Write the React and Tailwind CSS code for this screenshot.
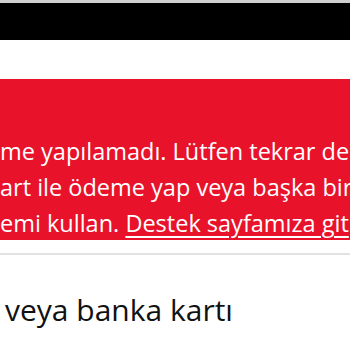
export default function App() {
  return (
    <div className="w-[350px] h-[350px] overflow-hidden bg-white font-['Open_Sans',sans-serif]">
      <div className="h-[3px] bg-[#cfcfcf]" />
      <div className="h-[37px] bg-black" />
      <div className="h-[39px] bg-white" />
      <div className="h-[161px] bg-[#e8132b] pt-[54px] text-white text-[23.5px] font-medium leading-[36px] whitespace-nowrap">
        <p>me yapılamadı. Lütfen tekrar deneyin,</p>
        <p>art ile ödeme yap veya başka bir ödeme</p>
        <p>
          emi kullan.{' '}
          <a href="#" className="underline underline-offset-4 decoration-[1.5px]">
            Destek sayfamıza git
          </a>
          .
        </p>
      </div>
      <div className="h-[13px]" />
      <div className="h-[2px] bg-[#e2e2e2]" />
      <div className="pt-[38px] pl-[5px] text-[30px] leading-[34px] text-[#111]">veya banka kartı</div>
    </div>
  );
}
